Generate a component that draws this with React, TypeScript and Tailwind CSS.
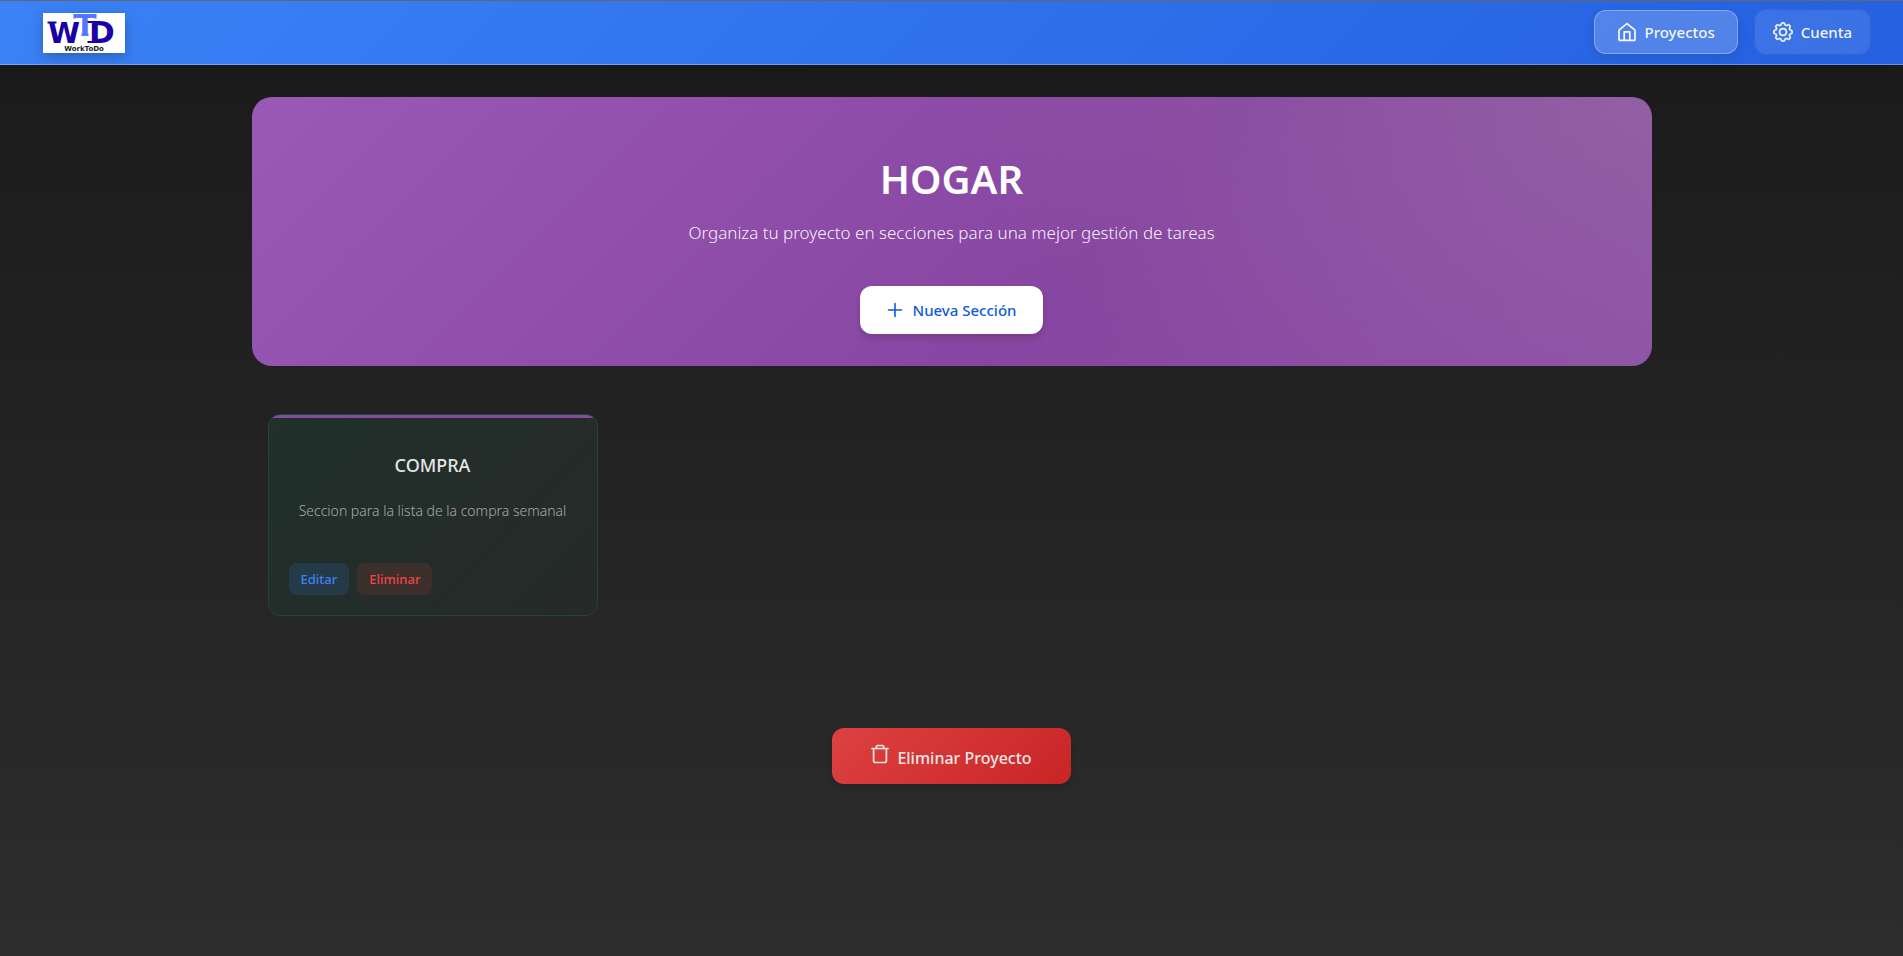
function Logo() {
  return (
    <svg viewBox="0 0 82 40" className="h-10 w-[82px] bg-white shadow-[0_4px_12px_rgba(0,0,0,0.25)]" role="img" aria-label="WorkToDo">
      <g fontFamily="DejaVu Sans, sans-serif" fontWeight="700">
        <text x="5" y="30" fontSize="29" fill="#1a00a8">W</text>
        <text x="46" y="30" fontSize="31" fill="#1a00a8">D</text>
        <text x="32" y="22" fontSize="29" fill="#5577ff">T</text>
      </g>
      <path d="M4.5 8.5h9v2h-9zM44.5 8h6v2h-6zM44.5 28h6v2h-6z" fill="#1a00a8" />
      <path d="M30.5 1h23v4.5h-2l-1-1h-17l-1 1h-2zM38.5 20.5h7V23h-7z" fill="#5577ff" />
      <text x="41" y="38" fontSize="7" fontFamily="DejaVu Sans, sans-serif" fontWeight="700" textAnchor="middle" fill="#222222">
        WorkToDo
      </text>
    </svg>
  );
}

function HomeIcon() {
  return (
    <svg viewBox="0 0 20 20" className="size-5" fill="none" stroke="currentColor" strokeWidth="1.7" strokeLinejoin="round" strokeLinecap="round" aria-hidden="true">
      <path d="M2 8.2 10 1.6l8 6.6v9.2a1 1 0 0 1-1 1H3a1 1 0 0 1-1-1z" />
      <path d="M7.2 18.2v-8.4h5.6v8.4" />
    </svg>
  );
}

function GearIcon() {
  return (
    <svg viewBox="0 0 16 16" className="size-5" fill="currentColor" stroke="currentColor" strokeWidth="0.4" aria-hidden="true">
      <path d="M8 4.754a3.246 3.246 0 1 0 0 6.492 3.246 3.246 0 0 0 0-6.492M5.754 8a2.246 2.246 0 1 1 4.492 0 2.246 2.246 0 0 1-4.492 0" />
      <path d="M9.796 1.343c-.527-1.79-3.065-1.79-3.592 0l-.094.319a.873.873 0 0 1-1.255.52l-.292-.16c-1.64-.892-3.433.902-2.54 2.541l.159.292a.873.873 0 0 1-.52 1.255l-.319.094c-1.79.527-1.79 3.065 0 3.592l.319.094a.873.873 0 0 1 .52 1.255l-.16.292c-.892 1.64.901 3.434 2.541 2.54l.292-.159a.873.873 0 0 1 1.255.52l.094.319c.527 1.79 3.065 1.79 3.592 0l.094-.319a.873.873 0 0 1 1.255-.52l.292.16c1.64.893 3.434-.902 2.54-2.541l-.159-.292a.873.873 0 0 1 .52-1.255l.319-.094c1.79-.527 1.79-3.065 0-3.592l-.319-.094a.873.873 0 0 1-.52-1.255l.16-.292c.893-1.64-.902-3.433-2.541-2.54l-.292.159a.873.873 0 0 1-1.255-.52zm-2.633.283c.246-.835 1.428-.835 1.674 0l.094.319a1.873 1.873 0 0 0 2.693 1.115l.291-.16c.764-.415 1.6.42 1.184 1.185l-.159.292a1.873 1.873 0 0 0 1.116 2.692l.318.094c.835.246.835 1.428 0 1.674l-.319.094a1.873 1.873 0 0 0-1.115 2.693l.16.291c.415.764-.42 1.6-1.185 1.184l-.291-.159a1.873 1.873 0 0 0-2.693 1.116l-.094.318c-.246.835-1.428.835-1.674 0l-.094-.319a1.873 1.873 0 0 0-2.692-1.115l-.292.16c-.764.415-1.6-.42-1.184-1.185l.159-.291A1.873 1.873 0 0 0 1.945 8.93l-.319-.094c-.835-.246-.835-1.428 0-1.674l.319-.094A1.873 1.873 0 0 0 3.06 4.377l-.16-.292c-.415-.764.42-1.6 1.185-1.184l.292.159a1.873 1.873 0 0 0 2.692-1.115z" />
    </svg>
  );
}

function PlusIcon() {
  return (
    <svg viewBox="0 0 16 16" className="size-4" fill="none" stroke="currentColor" strokeWidth="1.6" strokeLinecap="round" aria-hidden="true">
      <path d="M8 1.5v13M1.5 8h13" />
    </svg>
  );
}

function TrashIcon() {
  return (
    <svg viewBox="0 0 18 20" className="h-5 w-[18px]" fill="none" stroke="currentColor" strokeWidth="1.7" strokeLinejoin="round" strokeLinecap="round" aria-hidden="true">
      <path d="M1 4.5h16" />
      <path d="M5.4 4.5V2.9a1.4 1.4 0 0 1 1.4-1.4h4.4a1.4 1.4 0 0 1 1.4 1.4v1.6" />
      <path d="M2.6 4.5v12.6A1.4 1.4 0 0 0 4 18.5h10a1.4 1.4 0 0 0 1.4-1.4V4.5" />
    </svg>
  );
}

const sections = [{ name: "COMPRA", description: "Seccion para la lista de la compra semanal" }];

export default function App() {
  return (
    <div className="min-h-screen bg-linear-to-b from-[#1a1a1a] to-[#2d2d2d] font-['Noto_Sans',sans-serif]">
      <header className="flex items-center justify-between border-t border-b border-t-[#666666] border-b-white/30 bg-[linear-gradient(135deg,#3b82f6,#2460e0)] bg-origin-border pr-8 pl-[43px] shadow-[0_4px_20px_rgba(0,0,0,0.15)]">
        <a href="#inicio" className="pt-px"><Logo /></a>
        <nav className="flex items-center gap-4 pt-2 pb-[9px] text-[15px] leading-5 font-medium text-white/95">
          <a href="#proyectos" className="flex h-11 items-center gap-2 rounded-xl border border-white/30 bg-white/20 px-[22px] shadow-[0_4px_12px_rgba(0,0,0,0.1)]">
            <HomeIcon />
            Proyectos
          </a>
          <a href="#cuenta" className="flex h-[46px] items-center gap-2 rounded-xl border border-black/10 bg-white/10 px-[18px]">
            <GearIcon />
            Cuenta
          </a>
        </nav>
      </header>

      <main className="mx-auto max-w-[1400px] pt-8">
        <section className="flex flex-col items-center rounded-[20px] bg-[radial-gradient(ellipse_50%_140%_at_100%_0%,rgba(165,140,165,0.3),transparent),linear-gradient(135deg,#9b59b6_0%,#8746a1_60%,#8e50a6_100%)] px-8 pt-14 pb-8 text-center">
          <h1 className="text-[40px] leading-[52px] font-semibold text-white">HOGAR</h1>
          <p className="mt-3 text-[17px] leading-8 font-light text-white/95">
            Organiza tu proyecto en secciones para una mejor gestión de tareas
          </p>
          <button type="button" className="mt-[37px] flex h-12 items-center gap-2.5 rounded-xl bg-white px-[27px] text-[15px] font-medium text-[#0f5bd7] shadow-[0_4px_6px_rgba(0,0,0,0.15)]">
            <PlusIcon />
            Nueva Sección
          </button>
        </section>

        <section className="mt-12 grid grid-cols-1 gap-4 px-4 sm:grid-cols-2 lg:grid-cols-4">
          {sections.map((section) => (
            <article key={section.name} className="overflow-hidden rounded-xl border border-[#1f4638] bg-[linear-gradient(135deg,#20302a,#262a28)]">
              <div className="h-[3px] bg-[#8549a0]" />
              <div className="px-5 pt-[33px] pb-5">
                <h2 className="text-center text-[18px] leading-7 font-medium text-[#e5e5e5]">{section.name}</h2>
                <p className="mt-5 text-center text-[14px] leading-6 font-light text-[#a9a9a9]">{section.description}</p>
                <div className="mt-10 flex gap-2 text-[13px] leading-5 font-medium">
                  <button type="button" className="h-8 rounded-lg bg-[#3b82f6]/15 px-3 text-[#3b82f6]">Editar</button>
                  <button type="button" className="h-8 rounded-lg bg-[#ef4444]/12 px-3 text-[#ef4444]">Eliminar</button>
                </div>
              </div>
            </article>
          ))}
        </section>

        <div className="mt-28 flex justify-center">
          <button type="button" className="flex h-14 items-start gap-2 rounded-xl bg-[linear-gradient(135deg,#dd4141,#c82525)] px-[39px] pt-4 text-[16px] leading-7 font-medium text-[#eee6e6] shadow-[0_4px_8px_rgba(0,0,0,0.15)]">
            <TrashIcon />
            Eliminar Proyecto
          </button>
        </div>
      </main>
    </div>
  );
}
